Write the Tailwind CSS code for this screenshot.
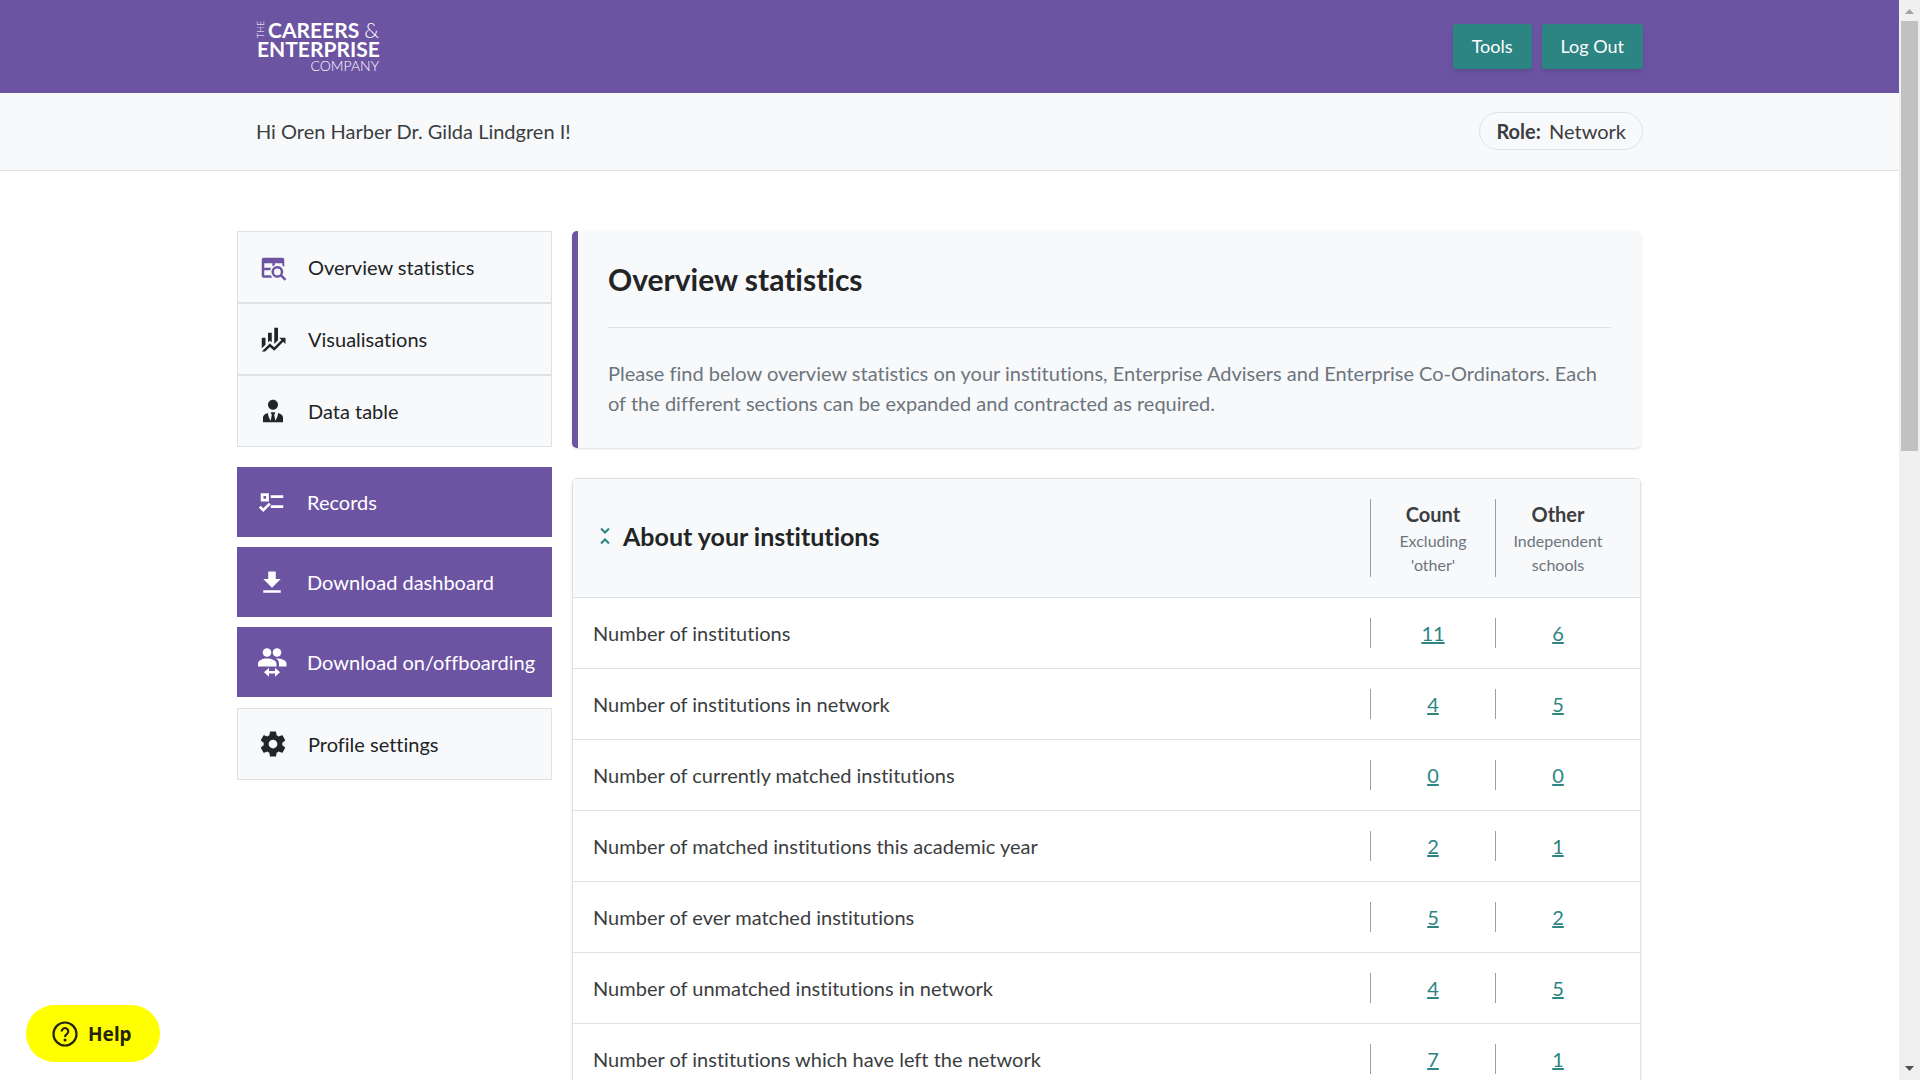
<!DOCTYPE html>
<html lang="en">
<head>
  <meta charset="UTF-8">
  <meta name="viewport" content="width=device-width, initial-scale=1.0">
  <title>Overview statistics</title>
  <script src="https://cdn.jsdelivr.net/npm/@tailwindcss/browser@4"></script>
</head>
<body class="flex h-screen overflow-hidden bg-white font-[Lato,sans-serif] text-xl leading-[30px] text-[#3b3d3f] [font-variant-ligatures:none]">
  <div class="min-w-0 flex-1">
    <!-- Header -->
    <header class="bg-[#6c54a3]">
      <div class="mx-auto flex h-[93px] max-w-[1387px] items-center justify-between">
        <a href="#" aria-label="The Careers &amp; Enterprise Company">
          <svg class="h-[54px] w-[126px] overflow-visible fill-white" viewBox="0 0 126 54">
            <text x="8" y="18" font-size="9" font-weight="300" transform="rotate(-90 8 18)">THE</text>
            <text x="12" y="18" font-size="21" font-weight="700">CAREERS</text>
            <text x="123" y="18" font-size="21" font-weight="300" text-anchor="end">&amp;</text>
            <text x="1" y="37" font-size="21" font-weight="700">ENTERPRISE</text>
            <text x="123" y="51" font-size="14" font-weight="300" text-anchor="end">COMPANY</text>
          </svg>
        </a>
        <nav class="flex gap-[10px] text-lg leading-[25px] text-white">
          <button type="button" class="rounded-[3px] bg-[#2c8583] px-[19px] py-[10px] shadow-md">Tools</button>
          <button type="button" class="rounded-[3px] bg-[#2c8583] px-[19px] py-[10px] shadow-md">Log Out</button>
        </nav>
      </div>
    </header>

    <!-- Greeting -->
    <div class="border-b border-[#dee2e6] bg-[#f8f9fb]">
      <div class="mx-auto flex max-w-[1387px] items-center justify-between pt-[19px] pb-5">
        <p>Hi Oren Harber Dr. Gilda Lindgren I!</p>
        <p class="rounded-full border border-[#dee2e6] px-4 py-[3px]"><strong class="mr-[3px] font-bold">Role:</strong> Network</p>
      </div>
    </div>

    <div class="mx-auto mt-15 flex max-w-[1425px] items-start gap-5 pr-[21px]">
      <!-- Sidebar -->
      <nav class="w-[315px] shrink-0 text-[#222425]">
        <a href="#" class="flex items-center gap-5 border border-[#dee2e6] bg-[#f8f9fb] px-5 py-5">
          <svg class="size-[30px] shrink-0 fill-[#6c54a3]" viewBox="0 0 24 24"><path d="M4.500 4.500H19.500A1.500 1.500 0 0 1 21 6V12A6.500 6.500 0 0 0 19.500 10.800V9H13.500V10.300A6.500 6.500 0 0 0 11.500 11.500V9H5V12.500H10.600A6.500 6.500 0 0 0 9.700 14.500H5V18.500H10.200A6.500 6.500 0 0 0 11.500 20.500H4.500A1.500 1.500 0 0 1 3 19V6A1.500 1.500 0 0 1 4.500 4.500ZM15.500 11.200A4.700 4.700 0 0 1 19.500 18.400L22.700 21.600L21.300 23L18.100 19.800A4.700 4.700 0 1 1 15.500 11.200ZM15.500 13.200A2.700 2.700 0 1 0 15.500 18.600A2.700 2.700 0 0 0 15.500 13.200Z"/></svg>
          Overview statistics
        </a>
        <a href="#" class="flex items-center gap-5 border border-[#dee2e6] bg-[#f8f9fb] px-5 py-5">
          <svg class="size-[30px] shrink-0 fill-current" viewBox="0 0 24 24"><path d="M6,16.5L3,19.44V11H6M11,14.66L9.43,13.32L8,14.64V7H11M16,13L13,16V3H16M18.81,12.81L17,11H22V16L20.21,14.21L13,21.36L9.53,18.34L5.75,22H3L9.47,15.66L13,18.64"/></svg>
          Visualisations
        </a>
        <a href="#" class="flex items-center gap-5 border border-[#dee2e6] bg-[#f8f9fb] px-5 py-5">
          <svg class="size-[30px] shrink-0 fill-current" viewBox="0 0 24 24"><path d="M12 3C14.21 3 16 4.79 16 7S14.21 11 12 11 8 9.21 8 7 9.79 3 12 3M16 13.54C16 14.6 15.72 17.07 13.81 19.83L13 15L13.94 13.12C13.32 13.05 12.67 13 12 13S10.68 13.05 10.06 13.12L11 15L10.19 19.83C8.28 17.07 8 14.6 8 13.54C5.61 14.24 4 15.5 4 17V21H20V17C20 15.5 18.4 14.24 16 13.54Z"/></svg>
          Data table
        </a>
        <div class="mt-5 mb-[11px] flex flex-col gap-[10px] whitespace-nowrap text-white">
          <a href="#" class="flex items-center gap-5 bg-[#6c54a3] px-5 py-5">
            <svg class="size-[30px] shrink-0 fill-current" viewBox="0 0 24 24"><path d="M3,5H9.500V11.500H3V5M5.200,7.200V9.300H7.300V7.200H5.200M11,6.500H21V8.800H11V6.500M11,14.500H21V16.800H11V14.500M5,20L1.500,16.500L3,15L5,17L9.500,12.500L11,14L5,20Z"/></svg>
            Records
          </a>
          <a href="#" class="flex items-center gap-5 bg-[#6c54a3] px-5 py-5">
            <svg class="size-[30px] shrink-0 fill-current" viewBox="0 0 24 24"><path d="M5,20.500H19V18.500H5M19,9.500H15V3.500H9V9.500H5L12,16.500L19,9.500Z"/></svg>
            Download dashboard
          </a>
          <a href="#" class="flex items-center gap-5 bg-[#6c54a3] px-5 py-5">
            <svg class="size-[30px] shrink-0 fill-current" viewBox="0 0 30 30"><circle cx="10" cy="5.500" r="4.300"/><circle cx="20" cy="5.500" r="4.300"/><path d="M1 19.500V16.500C1 13.500 5.500 11.500 10 11.500S19.500 13.500 19.500 16.500V19.500ZM19 11.500C25 11.500 29.500 13.500 29.500 16.500V19.500H22V16.500C22 14.500 21 12.700 19 11.500ZM7 25.300L12 20.800V24H18V20.800L23 25.300L18 29.800V26.600H12V29.800Z"/></svg>
            Download on/offboarding
          </a>
        </div>
        <a href="#" class="flex items-center gap-5 border border-[#dee2e6] bg-[#f8f9fb] px-5 py-5">
          <svg class="size-[30px] shrink-0 fill-current" viewBox="0 0 24 24"><path d="M12,15.5A3.5,3.5 0 0,1 8.5,12A3.5,3.5 0 0,1 12,8.5A3.5,3.5 0 0,1 15.5,12A3.5,3.5 0 0,1 12,15.5M19.43,12.97C19.47,12.65 19.5,12.33 19.5,12C19.5,11.67 19.47,11.34 19.43,11L21.54,9.37C21.73,9.22 21.78,8.95 21.66,8.73L19.66,5.27C19.54,5.05 19.27,4.96 19.05,5.05L16.56,6.05C16.04,5.66 15.5,5.32 14.87,5.07L14.5,2.42C14.46,2.18 14.25,2 14,2H10C9.75,2 9.54,2.18 9.5,2.42L9.13,5.07C8.5,5.32 7.96,5.66 7.44,6.05L4.95,5.05C4.73,4.96 4.46,5.05 4.34,5.27L2.34,8.73C2.21,8.95 2.27,9.22 2.46,9.37L4.57,11C4.53,11.34 4.5,11.67 4.5,12C4.5,12.33 4.53,12.65 4.57,12.97L2.46,14.63C2.27,14.78 2.21,15.05 2.34,15.27L4.34,18.73C4.46,18.95 4.73,19.03 4.95,18.95L7.44,17.94C7.96,18.34 8.5,18.68 9.13,18.93L9.5,21.58C9.54,21.82 9.75,22 10,22H14C14.25,22 14.46,21.82 14.5,21.58L14.87,18.93C15.5,18.67 16.04,18.34 16.56,17.94L19.05,18.95C19.27,19.03 19.54,18.95 19.66,18.73L21.66,15.27C21.78,15.05 21.73,14.78 21.54,14.63L19.43,12.97Z"/></svg>
          Profile settings
        </a>
      </nav>

      <main class="min-w-0 flex-1">
        <section class="rounded-[5px] border-l-6 border-[#6c54a3] bg-[#f8f9fb] p-[30px] shadow-sm">
          <h1 class="text-3xl leading-9 font-bold text-[#222425]">Overview statistics</h1>
          <hr class="my-[30px] border-[#dee2e6]">
          <p class="text-[#6c757d]">Please find below overview statistics on your institutions, Enterprise Advisers and Enterprise Co-Ordinators. Each of the different sections can be expanded and contracted as required.</p>
        </section>

        <!-- Institutions -->
        <section class="mt-[30px] overflow-hidden rounded-[5px] border border-[#dee2e6] shadow-sm">
          <table class="w-full">
            <thead class="bg-[#f8f9fb]">
              <tr class="border-b border-[#dee2e6]">
                <th class="px-5 pb-1 text-left">
                  <button type="button" class="flex items-center text-[25px] leading-[30px] font-bold text-[#222425]">
                    <svg class="mr-1.5 size-6 fill-none stroke-[#2c8583] stroke-2" viewBox="0 0 24 24"><path d="M8 4.500L12 8.500L16 4.500M8 19.500L12 15.500L16 19.500"/></svg>
                    About your institutions
                  </button>
                </th>
                <th class="w-[125px] py-5 font-normal">
                  <div class="border-l border-[#9a9fa4] px-3"><span class="block font-bold">Count</span><span class="block text-base leading-6 text-[#6c757d]">Excluding 'other'</span></div>
                </th>
                <th class="w-[145px] py-5 pr-5 font-normal">
                  <div class="border-l border-[#9a9fa4] px-3"><span class="block font-bold">Other</span><span class="block text-base leading-6 text-[#6c757d]">Independent schools</span></div>
                </th>
              </tr>
            </thead>
            <tbody id="rows"></tbody>
          </table>
        </section>
      </main>
    </div>
  </div>

  <!-- Scrollbar -->
  <div class="flex w-[21px] shrink-0 flex-col items-center bg-[#f0f0f0]" aria-hidden="true">
    <svg class="h-[21px] w-[21px] shrink-0 fill-[#a3a3a3]" viewBox="0 0 21 21"><path d="M6 14L10.500 9L15 14Z"/></svg>
    <div class="h-[430px] w-[17px] bg-[#c1c1c1]"></div>
    <svg class="mt-auto h-[21px] w-[21px] shrink-0 fill-[#505050]" viewBox="0 0 21 21"><path d="M6 7L10.500 12L15 7Z"/></svg>
  </div>

  <!-- Help widget -->
  <button type="button" class="fixed bottom-[18px] left-[26px] flex h-[57px] items-center gap-[10px] rounded-full bg-[#ffff00] pr-7 pl-[26px] font-['Noto_Sans',sans-serif] text-[19px] font-bold text-[#25250f]">
    <svg class="size-[26px] fill-none stroke-current" viewBox="0 0 26 26"><circle cx="13" cy="13" r="11.500" stroke-width="2.200"/><path d="M9.700 10.500A3.300 3.300 0 1 1 14.800 13.100C13.600 13.900 13 14.400 13 16" stroke-width="2.200"/><circle cx="13" cy="19" r="1.500" class="fill-current stroke-none"/></svg>
    Help
  </button>

  <script>
    const rows = [
      ['Number of institutions', 11, 6],
      ['Number of institutions in network', 4, 5],
      ['Number of currently matched institutions', 0, 0],
      ['Number of matched institutions this academic year', 2, 1],
      ['Number of ever matched institutions', 5, 2],
      ['Number of unmatched institutions in network', 4, 5],
      ['Number of institutions which have left the network', 7, 1],
    ];

    document.getElementById('rows').innerHTML = rows.map(([label, count, other]) => `
      <tr class="border-b border-[#dee2e6]">
        <td class="px-5 py-5">${label}</td>
        <td class="py-5 text-center"><div class="border-l border-[#9a9fa4]"><a href="#" class="text-[#2c8583] underline">${count}</a></div></td>
        <td class="py-5 pr-5 text-center"><div class="border-l border-[#9a9fa4]"><a href="#" class="text-[#2c8583] underline">${other}</a></div></td>
      </tr>`).join('');
  </script>
</body>
</html>
